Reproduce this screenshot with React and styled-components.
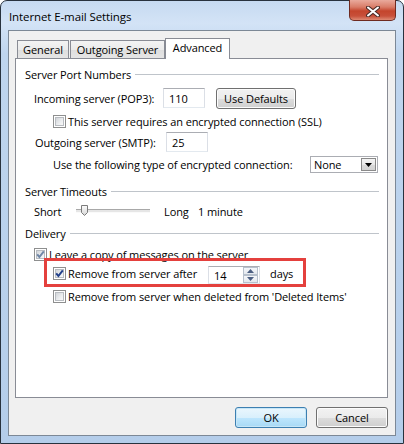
import React from 'react';
import styled, { createGlobalStyle } from 'styled-components';

const GlobalStyle = createGlobalStyle`
  html, body {
    margin: 0;
    padding: 0;
    background: #fff;
  }
  body {
    font-family: "Open Sans", "Noto Sans", sans-serif;
    font-size: 11px;
    letter-spacing: -0.1px;
    color: #000;
  }
`;

const Window = styled.div`
  width: 404px;
  height: 444px;
  box-sizing: border-box;
  border: 1px solid #28323e;
  border-radius: 7px 7px 0 0;
  background: linear-gradient(180deg, #c6daf1 0%, #d3e3f6 5%, #bfd5ee 12%, #b9d1ec 60%, #b4cdea 100%);
  padding: 0 7px 7px 7px;
  display: flex;
  flex-direction: column;
`;

const TitleBar = styled.div`
  height: 29px;
  display: flex;
  justify-content: space-between;
  align-items: flex-start;
`;

const Title = styled.div`
  padding: 8px 0 0 1px;
  font-size: 11.5px;
  line-height: 16px;
`;

const CloseButton = styled.div`
  width: 47px;
  height: 21px;
  margin-top: -1px;
  box-sizing: border-box;
  border: 1px solid #6e2a20;
  border-top: none;
  border-radius: 0 0 5px 5px;
  background: linear-gradient(180deg, #e9aa9c 0%, #d97c68 35%, #c4452d 55%, #c8503a 80%, #de8a74 100%);
  display: flex;
  justify-content: center;
  align-items: center;
  padding-top: 3px;
`;

const Client = styled.div`
  flex: 1;
  border: 1px solid #7c8896;
  background: #f0f0f0;
  display: flex;
  flex-direction: column;
  padding: 7px 7px 7px 6px;
`;

const TabStrip = styled.div`
  height: 20px;
  display: flex;
  align-items: flex-end;
  padding-left: 2px;
`;

const Tab = styled.div`
  box-sizing: border-box;
  width: ${({ w }) => w}px;
  margin-left: ${({ gap }) => gap || 0}px;
  height: ${({ active }) => (active ? 21 : 18)}px;
  margin-bottom: ${({ active }) => (active ? -1 : 0)}px;
  position: relative;
  z-index: ${({ active }) => (active ? 1 : 0)};
  border: 1px solid #898c95;
  border-bottom: none;
  background: ${({ active }) => (active ? '#fff' : 'linear-gradient(180deg, #f3f3f3 0%, #ebebeb 50%, #dedede 51%, #e5e5e5 100%)')};
  display: flex;
  justify-content: center;
  align-items: ${({ active }) => (active ? 'flex-start' : 'center')};
  padding-top: 1px;
  line-height: 16px;
`;

const Panel = styled.div`
  flex: 1;
  border: 1px solid #898c95;
  background: #fff;
  padding: 7px 8px 0 9px;
`;

const GroupHeader = styled.div`
  height: 16px;
  display: flex;
  align-items: center;
  margin-top: ${({ top }) => top || 0}px;

  &::after {
    content: '';
    flex: 1;
    height: 1px;
    margin-left: 4px;
    background: #bfc4ca;
  }
`;

const Row = styled.div`
  display: flex;
  align-items: center;
  height: ${({ h }) => h}px;
  margin-top: ${({ top }) => top || 0}px;
  margin-left: ${({ indent }) => indent || 0}px;
`;

const Label = styled.span`
  width: ${({ w }) => (w ? `${w}px` : 'auto')};
  flex-shrink: 0;
  margin-left: ${({ gap }) => gap || 0}px;
  white-space: nowrap;
`;

const TextBox = styled.div`
  box-sizing: border-box;
  width: ${({ w }) => w}px;
  height: ${({ h }) => h || 20}px;
  border: 1px solid #dbdfe6;
  border-top-color: #abadb3;
  border-bottom-color: #e3e9ef;
  background: #fff;
  display: flex;
  align-items: center;
  padding-left: ${({ pad }) => pad || 5}px;
`;

const Button = styled.div`
  box-sizing: border-box;
  width: ${({ w }) => w}px;
  height: ${({ h }) => h || 21}px;
  margin-left: ${({ gap }) => gap || 0}px;
  border: 1px solid ${({ primary }) => (primary ? '#3c7fb1' : '#707070')};
  border-radius: 3px;
  background: ${({ primary }) =>
    primary
      ? 'linear-gradient(180deg, #eaf6fd 0%, #d9f0fc 50%, #bee6fd 51%, #a7d9f5 100%)'
      : 'linear-gradient(180deg, #f2f2f2 0%, #ebebeb 50%, #dddddd 51%, #cfcfcf 100%)'};
  box-shadow: inset 0 0 0 1px ${({ primary }) => (primary ? '#c6e6f7' : '#fcfcfc')};
  display: flex;
  justify-content: center;
  align-items: center;
`;

const ButtonRow = styled.div`
  display: flex;
  justify-content: flex-end;
  gap: 9px;
  margin-top: 9px;
`;

const Box = styled.div`
  position: relative;
  box-sizing: border-box;
  width: 13px;
  height: 13px;
  flex-shrink: 0;
  border: 1px solid #8e8f8f;
  background: #fff;

  &::before {
    content: '';
    position: absolute;
    inset: 1px;
    box-sizing: border-box;
    border: 1px solid #b8bcc1;
    background: linear-gradient(135deg, #d2d5d9 0%, #eceef0 60%, #f8f8f8 100%);
  }

  svg {
    position: absolute;
    left: -1px;
    top: -1px;
  }
`;

const Highlight = styled.div`
  position: relative;
  box-sizing: border-box;
  width: 262px;
  height: 29px;
  margin: -3px 0 0 19px;
  border: 3px solid #e4403d;
  padding: 2px 0 0 6px;
  display: flex;
  align-items: center;
`;

const Select = styled.div`
  box-sizing: border-box;
  width: 68px;
  height: 17px;
  border: 1px solid #abadb3;
  background: #fff;
  display: flex;
  align-items: center;
  justify-content: space-between;
  padding: 0 1px 0 3px;
`;

const DropButton = styled.div`
  box-sizing: border-box;
  width: 15px;
  height: 13px;
  border: 1px solid #8a8a8a;
  background: linear-gradient(180deg, #f4f4f4 0%, #e8e8e8 50%, #dadada 51%, #d2d2d2 100%);
  display: flex;
  justify-content: center;
  align-items: center;
`;

const Spin = styled(TextBox)`
  justify-content: space-between;
  padding-right: 1px;
  margin-top: 3px;
`;

const SpinButtons = styled.div`
  display: flex;
  flex-direction: column;
`;

const SpinButton = styled.div`
  box-sizing: border-box;
  width: 15px;
  height: 8px;
  border: 1px solid #b6c0cc;
  background: linear-gradient(180deg, #f5f7fa 0%, #e3e8ee 100%);
  display: flex;
  justify-content: center;
  align-items: center;
`;

const Slider = styled.div`
  position: relative;
  width: 74px;
  flex-shrink: 0;
  height: 16px;
  display: flex;
  align-items: center;
`;

const Groove = styled.div`
  width: 100%;
  height: 2px;
  border-top: 1px solid #a8a8a8;
  background: #e6e6e6;
  border-bottom: 1px solid #fafafa;
`;

const Thumb = styled.svg`
  position: absolute;
  left: 5px;
  top: 2px;
`;

const Check = ({ checked, muted }) => (
  <Box>
    {checked && (
      <svg width="13" height="13" viewBox="0 0 13 13">
        <path
          d="M3.2 6.4 L5.4 9 L9.8 3.4"
          fill="none"
          stroke={muted ? '#6f86a6' : '#22408a'}
          strokeWidth="2"
        />
      </svg>
    )}
  </Box>
);

const Arrow = ({ up, color }) => (
  <svg width="7" height="4" viewBox="0 0 7 4">
    <path d={up ? 'M0 4 L3.5 0 L7 4 Z' : 'M0 0 L7 0 L3.5 4 Z'} fill={color} />
  </svg>
);

export default function App() {
  return (
    <>
      <GlobalStyle />
      <Window>
        <TitleBar>
          <Title>Internet E-mail Settings</Title>
          <CloseButton>
            <svg width="14" height="11" viewBox="0 0 14 11">
              <path d="M2 1.5 L12 9.5 M12 1.5 L2 9.5" stroke="#4a2a26" strokeWidth="4" strokeLinecap="round" />
              <path d="M2 1.5 L12 9.5 M12 1.5 L2 9.5" stroke="#fff" strokeWidth="2" strokeLinecap="round" />
            </svg>
          </CloseButton>
        </TitleBar>
        <Client>
          <TabStrip>
            <Tab w={52}>General</Tab>
            <Tab w={95} gap={1}>Outgoing Server</Tab>
            <Tab w={65} active>Advanced</Tab>
          </TabStrip>
          <Panel>
            <GroupHeader>Server Port Numbers</GroupHeader>
            <Row h={20} top={6} indent={9}>
              <Label w={129}>Incoming server (POP3):</Label>
              <TextBox w={42}>110</TextBox>
              <Button w={80} h={21} gap={11}>Use Defaults</Button>
            </Row>
            <Row h={15} top={6} indent={28}>
              <Check />
              <Label gap={2}>This server requires an encrypted connection (SSL)</Label>
            </Row>
            <Row h={20} top={3} indent={10}>
              <Label w={131}>Outgoing server (SMTP):</Label>
              <TextBox w={42}>25</TextBox>
            </Row>
            <Row h={17} top={4} indent={28}>
              <Label w={257}>Use the following type of encrypted connection:</Label>
              <Select>
                None
                <DropButton>
                  <Arrow color="#000" />
                </DropButton>
              </Select>
            </Row>
            <GroupHeader top={10}>Server Timeouts</GroupHeader>
            <Row h={16} top={4} indent={9}>
              <Label w={42}>Short</Label>
              <Slider>
                <Groove />
                <Thumb width="7" height="11" viewBox="0 0 7 11">
                  <defs>
                    <linearGradient id="th" x1="0" y1="0" x2="0" y2="1">
                      <stop offset="0" stopColor="#fbfbfb" />
                      <stop offset="1" stopColor="#d6d6d6" />
                    </linearGradient>
                  </defs>
                  <path d="M0.5 0.5 H6.5 V7.5 L3.5 10.5 L0.5 7.5 Z" fill="url(#th)" stroke="#7b7b7b" />
                </Thumb>
              </Slider>
              <Label w={34} gap={14}>Long</Label>
              <Label>1 minute</Label>
            </Row>
            <GroupHeader top={6}>Delivery</GroupHeader>
            <Row h={13} top={7} indent={9}>
              <Check checked muted />
              <Label gap={2}>Leave a copy of messages on the server</Label>
            </Row>
            <Highlight>
              <Check checked />
              <Label w={140} gap={2}>Remove from server after</Label>
              <Spin w={52} h={18}>
                14
                <SpinButtons>
                  <SpinButton>
                    <Arrow up color="#4b5f82" />
                  </SpinButton>
                  <SpinButton>
                    <Arrow color="#4b5f82" />
                  </SpinButton>
                </SpinButtons>
              </Spin>
              <Label gap={10}>days</Label>
            </Highlight>
            <Row h={13} top={3} indent={28}>
              <Check />
              <Label gap={2}>Remove from server when deleted from 'Deleted Items'</Label>
            </Row>
          </Panel>
          <ButtonRow>
            <Button w={72} primary>OK</Button>
            <Button w={72}>Cancel</Button>
          </ButtonRow>
        </Client>
      </Window>
    </>
  );
}
